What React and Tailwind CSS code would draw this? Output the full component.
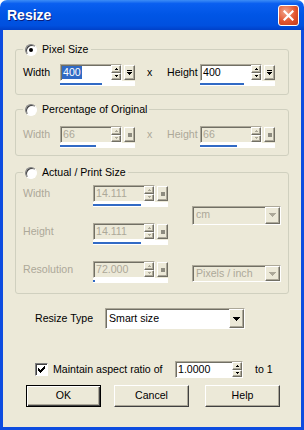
import React from "react";

const SUNK =
  "border border-t-[#ACA899] border-l-[#ACA899] border-r-white border-b-white shadow-[inset_1px_1px_0_#716F64]";

function Raised({ className = "", children }) {
  return (
    <div
      className={
        "bg-[#ECE9D8] border border-t-white border-l-white border-r-[#716F64] border-b-[#716F64] shadow-[inset_-1px_-1px_0_#ACA899] flex items-center justify-center " +
        className
      }
    >
      {children}
    </div>
  );
}

function UpDown({ disabled }) {
  const c = disabled ? "#ACA899" : "#000";
  return (
    <div className="flex flex-col w-[10px] self-stretch">
      <Raised className="flex-1">
        <svg width="3" height="2" viewBox="0 0 3 2">
          <path d="M1 0h1v1h1v1H0V1h1z" fill={c} />
        </svg>
      </Raised>
      <Raised className="flex-1">
        <svg width="3" height="2" viewBox="0 0 3 2">
          <path d="M0 0h3v1H2v1H1V1H0z" fill={c} />
        </svg>
      </Raised>
    </div>
  );
}

function SpinField({ value, disabled, selected, bar }) {
  return (
    <div className="flex flex-col w-[75px]">
      <div className="flex items-center gap-[2px]">
        <div
          className={
            "w-[62px] h-[17px] flex " +
            SUNK +
            (disabled ? " bg-[#ECE9D8]" : " bg-white")
          }
        >
          <div className="flex-1 flex items-center pl-[1px] leading-none">
            <span
              className={
                selected
                  ? "bg-[#316AC5] text-white px-[1px] py-[1px]"
                  : disabled
                  ? "text-[#ACA899] px-[1px]"
                  : "text-black px-[1px]"
              }
            >
              {value}
            </span>
          </div>
          <UpDown disabled={disabled} />
        </div>
        <Raised className="w-[11px] h-[15px]">
          {disabled ? (
            <div className="w-[4px] h-[4px] bg-[#8E8C80]" />
          ) : (
            <svg width="5" height="6" viewBox="0 0 5 6">
              <path d="M0 0h5v1H0z M0 2h5v1H4v1H3v1H2V4H1V3H0z" fill="#000" />
            </svg>
          )}
        </Raised>
      </div>
      <div className="h-[5px] bg-white flex items-center">
        <div className="h-[2px] bg-[#316AC5]" style={{ width: bar }} />
      </div>
    </div>
  );
}

function Select({ value, disabled, className = "" }) {
  return (
    <div
      className={
        "flex " + SUNK + (disabled ? " bg-[#ECE9D8]" : " bg-white") + " " + className
      }
    >
      <div
        className={
          "flex-1 flex items-center pl-[3px] " +
          (disabled ? "text-[#ACA899]" : "text-black")
        }
      >
        {value}
      </div>
      <Raised className="w-[15px] self-stretch">
        <svg width="7" height="4" viewBox="0 0 7 4">
          <path
            d="M0 0h7v1H6v1H5v1H4v1H3V3H2V2H1V1H0z"
            fill={disabled ? "#ACA899" : "#000"}
          />
        </svg>
      </Raised>
    </div>
  );
}

function Radio({ checked }) {
  return (
    <div className="w-[12px] h-[12px] rounded-full bg-white border border-t-[#808080] border-l-[#808080] border-r-white border-b-white shadow-[inset_1px_1px_0_#404040] flex items-center justify-center">
      {checked && <div className="w-[4px] h-[4px] rounded-full bg-black" />}
    </div>
  );
}

function Group({ label, checked, className = "", children }) {
  return (
    <fieldset
      className={
        "border border-[#D0D0BF] rounded-[3px] min-w-0 " + className
      }
    >
      <legend className="px-[2px] flex items-center gap-[5px] h-[13px]">
        <Radio checked={checked} />
        <span className="text-black">{label}</span>
      </legend>
      {children}
    </fieldset>
  );
}

function Button({ children, def }) {
  return (
    <div
      className={
        "w-[75px] h-[22px] flex items-center justify-center bg-[#ECE9D8] text-black " +
        (def
          ? "border border-black shadow-[inset_1px_1px_0_#fff,inset_-1px_-1px_0_#404040,inset_-2px_-2px_0_#ACA899]"
          : "border border-t-white border-l-white border-r-[#404040] border-b-[#404040] shadow-[inset_-1px_-1px_0_#ACA899]")
      }
    >
      {children}
    </div>
  );
}

function SizeRow({ w, h, disabled, selected }) {
  return (
    <div className={"flex items-start whitespace-nowrap " + (disabled ? "text-[#ACA899]" : "")}>
      <span className="w-[37px] h-[17px] flex items-center">Width</span>
      <SpinField value={w.v} selected={selected} disabled={disabled} bar={w.bar} />
      <span className="ml-[12px] w-[20px] h-[17px] flex items-center">x</span>
      <span className="w-[33px] h-[17px] flex items-center">Height</span>
      <SpinField value={h.v} disabled={disabled} bar={h.bar} />
    </div>
  );
}

export default function App() {
  const dis = "text-[#ACA899]";
  return (
    <div className="w-[304px] h-[430px] flex flex-col font-['Liberation_Sans',Arial,sans-serif] text-[10.6px] bg-white">
      {/* Title bar */}
      <div className="h-[30px] rounded-t-[7px] bg-[linear-gradient(to_bottom,#3D8DF6_0%,#0A5FF0_12%,#0055E5_50%,#0050DF_85%,#0040C8_100%)] flex items-center justify-between pl-[7px] pr-[5px]">
        <span className="text-white font-bold text-[14px] [text-shadow:1px_1px_0_#0A1E7A]">
          Resize
        </span>
        <div className="w-[21px] h-[21px] rounded-[3px] border border-white bg-[radial-gradient(circle_at_35%_30%,#F2A68C,#E2552F_55%,#C23A1B)] flex items-center justify-center">
          <svg width="11" height="11" viewBox="0 0 11 11">
            <path
              d="M1.5 1.5L9.5 9.5M9.5 1.5L1.5 9.5"
              stroke="#fff"
              strokeWidth="2.2"
              strokeLinecap="square"
            />
          </svg>
        </div>
      </div>

      {/* Body */}
      <div className="flex-1 flex flex-col bg-[#ECE9D8] border-x-[3px] border-b-[3px] border-[#0D4CE0] px-[12px] pt-[13px]">
        <Group label="Pixel Size" checked className="px-[7px] pt-[8px] pb-[8px]">
          <SizeRow selected w={{ v: "400", bar: 42 }} h={{ v: "400", bar: 44 }} />
        </Group>

        <Group label="Percentage of Original" className="mt-[8px] px-[7px] pt-[10px] pb-[7px]">
          <SizeRow disabled w={{ v: "66", bar: 36 }} h={{ v: "66", bar: 37 }} />
        </Group>

        <Group label="Actual / Print Size" className="mt-[10px] px-[7px] pt-[6px] pb-[10px]">
          <div className={"grid grid-cols-[70px_75px_1fr] gap-y-[16px] " + dis}>
            <span className="h-[17px] flex items-center">Width</span>
            <SpinField value="14.111" disabled bar={48} />
            <div className="row-span-2 self-center flex justify-end">
              <Select value="cm" disabled className="w-[89px] h-[19px]" />
            </div>
            <span className="h-[17px] flex items-center">Height</span>
            <SpinField value="14.111" disabled bar={48} />
            <span className="h-[17px] flex items-center">Resolution</span>
            <SpinField value="72.000" disabled bar={2} />
            <div className="flex justify-end pt-[4px]">
              <Select value="Pixels / inch" disabled className="w-[89px] h-[17px]" />
            </div>
          </div>
        </Group>

        <div className="mt-[14px] pl-[20px] flex items-center">
          <span className="w-[70px]">Resize Type</span>
          <Select value="Smart size" className="w-[140px] h-[21px]" />
        </div>

        <div className="mt-[32px] pl-[20px] flex items-center">
          <div className="w-[13px] h-[13px] bg-white border border-t-[#808080] border-l-[#808080] border-r-white border-b-white shadow-[inset_1px_1px_0_#404040] flex items-center justify-center">
            <svg width="7" height="7" viewBox="0 0 7 7">
              <path d="M0 2h1v1h1v1h1V3h1V2h1V1h1V0h1v3H6v1H5v1H4v1H3v1H2V6H1V5H0z" fill="#000" />
            </svg>
          </div>
          <span className="ml-[5px] w-[122px]">Maintain aspect ratio of</span>
          <div className={"w-[68px] h-[17px] flex bg-white " + SUNK}>
            <div className="flex-1 flex items-center pl-[2px]">1.0000</div>
            <UpDown />
          </div>
          <span className="ml-[12px]">to 1</span>
        </div>

        <div className="mt-[7px] pl-[11px] flex gap-[13px]">
          <Button def>OK</Button>
          <Button>Cancel</Button>
          <div className="ml-[3px]">
            <Button>Help</Button>
          </div>
        </div>
      </div>
    </div>
  );
}
